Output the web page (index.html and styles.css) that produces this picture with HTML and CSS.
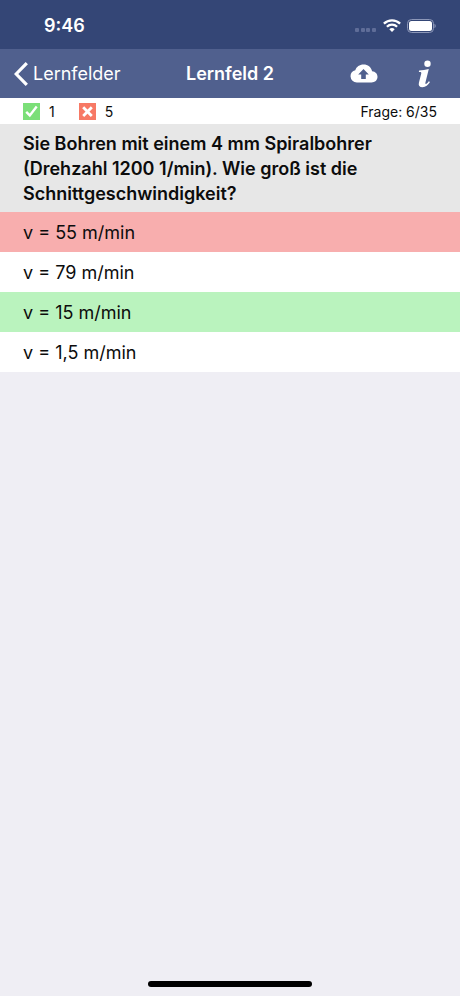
FILE: index.html
```html
<!DOCTYPE html>
<html lang="de">
<head>
<meta charset="utf-8">
<meta name="viewport" content="width=device-width, initial-scale=1">
<title>Lernfeld 2</title>
<link rel="stylesheet" href="styles.css">
</head>
<body>
<div class="status">
  <time class="clock">9:46</time>
  <div class="indicators">
    <svg class="signal" width="22" height="4" viewBox="0 0 22 4" fill="#5f6d98" aria-hidden="true"><rect width="4" height="4" rx="1"/><rect x="6" width="4" height="4" rx="1"/><rect x="11" width="4" height="4" rx="1"/><rect x="17" width="4" height="4" rx="1"/></svg>
    <svg width="18" height="13" viewBox="0 0 18 13" fill="none" stroke="#fff" stroke-width="2.3" aria-hidden="true"><path d="M.9 4.6a11.6 11.6 0 0 1 16.2 0M3.9 7.8a7.3 7.3 0 0 1 10.2 0"/><path d="M9 13 6.3 10.3a3.8 3.8 0 0 1 5.4 0z" fill="#fff" stroke="none"/></svg>
    <svg width="29" height="14" viewBox="0 0 29 14" aria-hidden="true"><rect x=".5" y=".5" width="26" height="13" rx="4" fill="none" stroke="#8c97b8"/><rect x="2" y="2" width="23" height="10" rx="2.5" fill="#fff"/><path d="M27.5 4.800c1.600.7 1.600 3.700 0 4.400z" fill="#8c97b8"/></svg>
  </div>
</div>
<header class="nav">
  <a class="back" href="#lernfelder"><svg width="14" height="24" viewBox="0 0 14 24" fill="none" stroke="#fff" stroke-width="3.2" aria-hidden="true"><path d="M12.800 1.200 2.200 12l10.600 10.800"/></svg>Lernfelder</a>
  <h1 class="title">Lernfeld 2</h1>
  <div class="actions">
    <button class="action" type="button" aria-label="Hochladen"><svg width="28" height="19" viewBox="0 0 28 19" aria-hidden="true"><path d="M7 18.500A6.400 6.400 0 0 1 .5 12.300c0-3.100 1.900-5.300 4.800-6C6.400 2.700 9.500.5 13.500.5c4.400 0 7.700 2.600 8.600 6.700 3.300.4 5.400 2.600 5.400 5.600 0 3.400-2.500 5.700-6 5.700z" fill="#fff"/><path d="m13.500 5-5.300 5.500h3V15h4.600v-4.500h3z" fill="#50608e"/></svg></button>
    <button class="action" type="button" aria-label="Info"><svg width="16" height="28" viewBox="0 0 16 28" fill="#fff" aria-hidden="true"><circle cx="10.500" cy="3.700" r="3.200"/><path d="M2.200 10.400c3.200-.2 6.300-.6 9.600-1.400L8.500 22.300c-.4 1.700.1 2 .9 1.500.9-.5 1.700-1.500 2.400-2.500l1.200.8c-1.800 3.100-4.400 5.100-7.500 5.100-3 0-4.300-1.700-3.600-4.500l2.300-8.900c.3-1.300 0-1.900-1.200-1.900H1.800z"/></svg></button>
  </div>
</header>
<div class="score">
  <span class="count"><svg width="17" height="17" viewBox="0 0 17 17" role="img" aria-label="Richtig"><rect width="17" height="17" fill="#7bdf78"/><path d="m3.200 8.800 3.600 3.600 6.900-8.900" fill="none" stroke="#fff" stroke-width="2.400"/></svg>1</span>
  <span class="count"><svg width="17" height="17" viewBox="0 0 17 17" role="img" aria-label="Falsch"><rect width="17" height="17" fill="#f77965"/><path d="m4.200 4.200 8.600 8.800m0-8.800-8.600 8.800" fill="none" stroke="#fff" stroke-width="2.800"/></svg>5</span>
  <span class="progress">Frage: 6/35</span>
</div>
<main>
  <h2 class="question">Sie Bohren mit einem 4 mm Spiralbohrer (Drehzahl 1200 1/min). Wie groß ist die Schnittgeschwindigkeit?</h2>
  <div class="answers">
    <button class="answer wrong" type="button">v = 55 m/min</button>
    <button class="answer" type="button">v = 79 m/min</button>
    <button class="answer right" type="button">v = 15 m/min</button>
    <button class="answer" type="button">v = 1,5 m/min</button>
  </div>
</main>
<div class="home"></div>
</body>
</html>
```
FILE: styles.css
```css
* { box-sizing: border-box; }

body {
  margin: 0;
  min-height: 100vh;
  display: flex;
  flex-direction: column;
  background: #efeef4;
  color: #0c0c0c;
  font-family: Inter, "Liberation Sans", sans-serif;
  font-size: 18px;
}

svg { display: block; flex: none; }

button {
  border: 0;
  margin: 0;
  background: none;
  color: inherit;
  font: inherit;
}

.status {
  height: 49px;
  padding: 2px 24px 0 44px;
  display: flex;
  align-items: center;
  justify-content: space-between;
  background: #344676;
  color: #fff;
}

.clock { font-weight: 600; }

.indicators {
  display: flex;
  align-items: center;
  gap: 6px;
}

.signal {
  align-self: flex-end;
  margin-bottom: 1px;
}

.nav {
  height: 49px;
  padding: 0 14px;
  display: grid;
  grid-template-columns: 1fr auto 1fr;
  align-items: center;
  background: #50608e;
  color: #fff;
}

.back {
  display: flex;
  align-items: center;
  gap: 5px;
  color: inherit;
  text-decoration: none;
}

.title {
  margin: 0;
  font-size: 18px;
  font-weight: 600;
}

.actions {
  padding-right: 13px;
  display: flex;
  align-items: center;
  justify-content: flex-end;
  gap: 39px;
}

.action { padding: 0; }

.score {
  height: 26px;
  padding: 0 23px;
  display: flex;
  align-items: center;
  gap: 24px;
  background: #fff;
  font-size: 14px;
}

.count {
  display: flex;
  align-items: center;
  gap: 9px;
}

.progress { margin-left: auto; }

.question {
  margin: 0;
  padding: 7px 23px 6px;
  background: #e7e7e7;
  font-size: 18px;
  font-weight: 600;
  line-height: 25px;
}

.answers {
  display: flex;
  flex-direction: column;
}

.answer {
  height: 40px;
  padding: 0 23px;
  background: #fff;
  text-align: left;
}

.wrong { background: #f8aeae; }

.right { background: #baf3be; }

.home {
  width: 164px;
  height: 6px;
  margin: auto auto 9px;
  border-radius: 3px;
  background: #000;
}
```
